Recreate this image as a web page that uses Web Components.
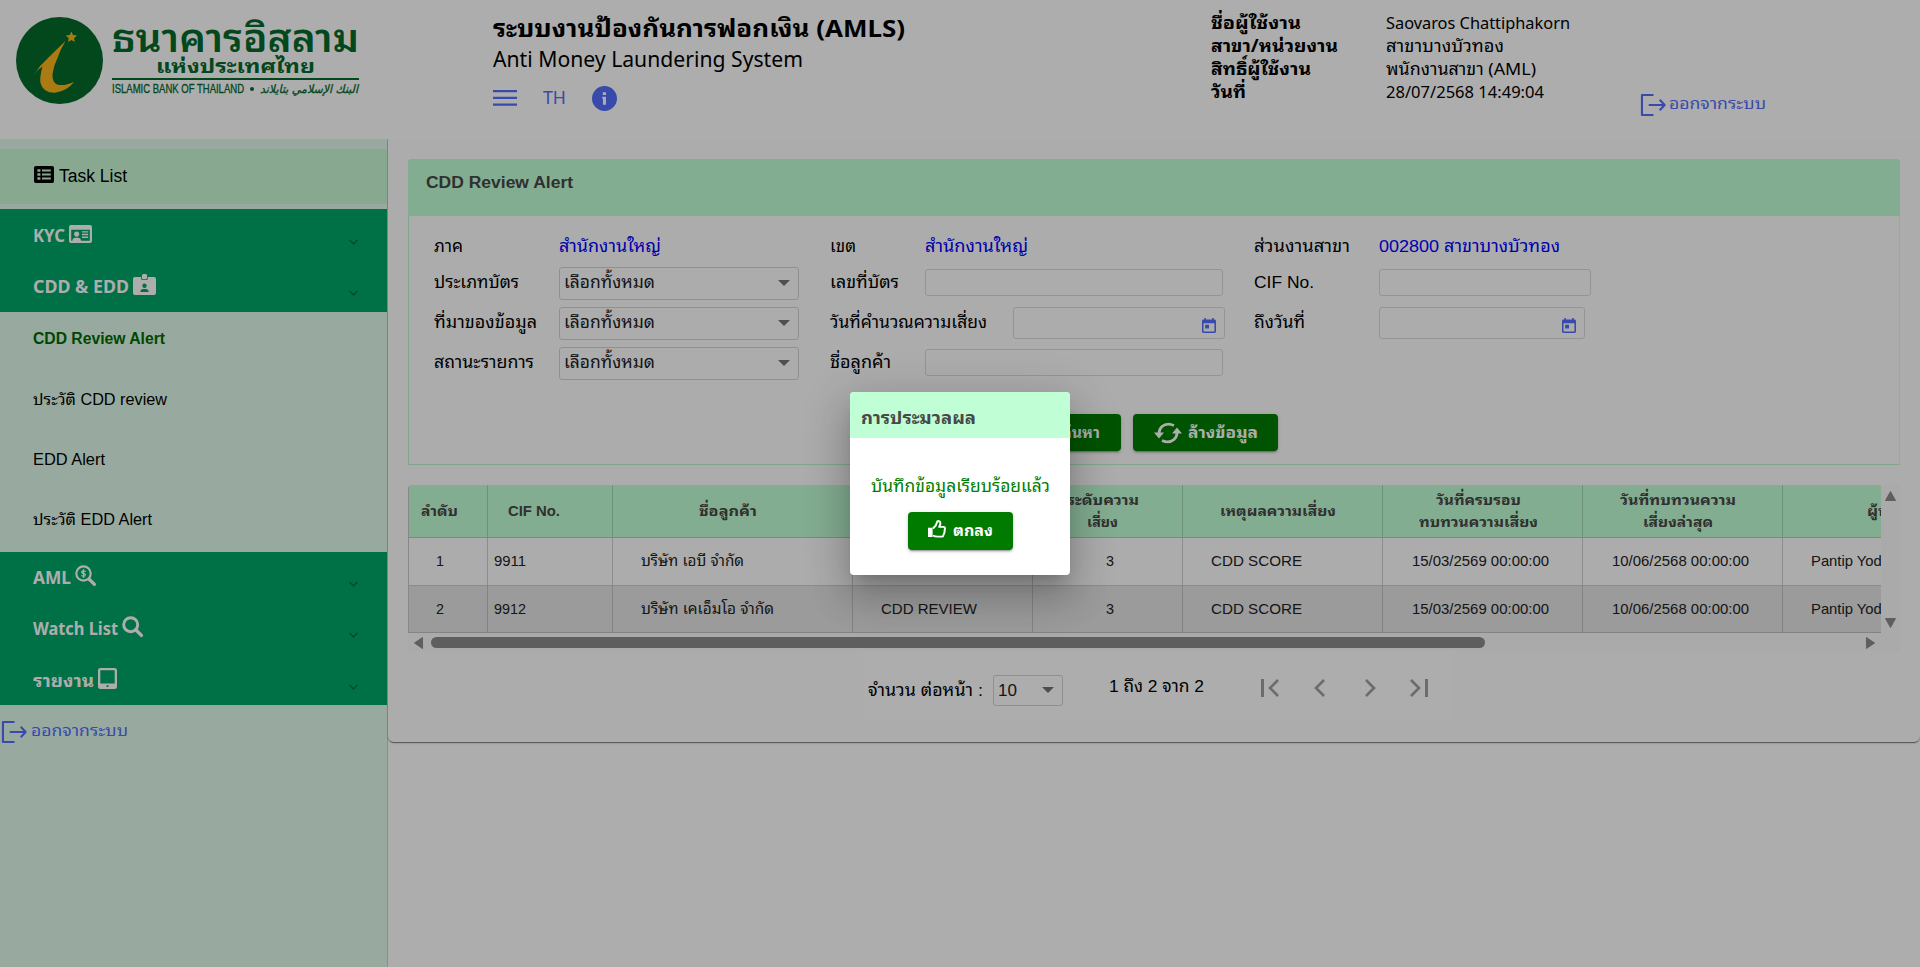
<!DOCTYPE html>
<html lang="th">
<head>
<meta charset="utf-8">
<title>AMLS</title>
<style>
html,body{margin:0;height:100%;overflow:hidden;background:#fff}
body{font-family:"Liberation Sans","Noto Sans Thai Looped","Loma","Waree","Garuda",sans-serif;font-size:16px;color:#000}
</style>
</head>
<body>
<amls-app></amls-app>
<script>
const make=(tag,html,after)=>customElements.define(tag,class extends HTMLElement{
  constructor(){super();this.attachShadow({mode:'open'});}
  connectedCallback(){if(this.done)return;this.done=true;
    this.shadowRoot.innerHTML=typeof html==='function'?html(this):html;if(after)after(this);}
});
const UI='"Noto Sans","Open Sans","Noto Sans Thai Looped","Loma","Waree",sans-serif';

/* icons */
const ICONS={
menu:['0 0 24 18','<path d="M0 1h24v2.2H0zM0 7.8h24V10H0zM0 14.6h24v2.2H0z"/>'],
info:['0 0 25 25','<path fill-rule="evenodd" d="M12.5 0a12.5 12.5 0 1 0 0 25a12.5 12.5 0 0 0 0-25zM10.8 6.3h3.2v2.8h-3.2zM10.2 10.8h3.8v7.9h-3.1v-6.2h-.7z"/>'],
exit:['0 0 26 22','<path fill="none" stroke="currentColor" stroke-width="2.2" stroke-linejoin="round" d="M13 1H1v20h12M8 11h16M19.5 5.8L24.6 11l-5.1 5.2"/>'],
list:['0 0 20 17','<path fill-rule="evenodd" d="M1.8 0h16.4Q20 0 20 1.8v13.4Q20 17 18.2 17H1.8Q0 17 0 15.200V1.800Q0 0 1.800 0zM3.400 3.200v2.600h3V3.200zM8 3.600v1.800h8.800V3.600zM3.400 7.200v2.600h3V7.200zM8 7.600v1.800h8.800V7.600zM3.400 11.200v2.600h3v-2.600zM8 11.600v1.800h8.800v-1.800z"/>'],
idcard:['0 0 24 19','<path fill-rule="evenodd" d="M2 0h20q2 0 2 2v15q0 2-2 2H2q-2 0-2-2V2Q0 0 2 0zM2.300 5v11.500h1.200q.5-3 3-3h3q2.500 0 3 3h9.200V5z"/><circle cx="8" cy="9.600" r="2.700"/><path d="M13.500 6.500h6.500v1.500h-6.500zM13.500 9.300h6.500v1.500h-6.500zM13.500 12.100h6.500v1.500h-6.500z"/>'],
badge:['0 0 24 21','<path fill-rule="evenodd" d="M2 3h6.500v1.500q0 1.500 1.500 1.500h4q1.500 0 1.500-1.500V3H22q2 0 2 2v14q0 2-2 2H2q-2 0-2-2V5q0-2 2-2zM12 9.400a2.300 2.300 0 1 0 0 4.600a2.300 2.300 0 0 0 0-4.600zM7.600 18h8.800q-.3-3-3-3h-2.800q-2.700 0-3 3z"/><rect x="9.300" y="0" width="5.400" height="5.200" rx="1.500"/>'],
search:['0 0 21 21','<circle cx="8.700" cy="8.700" r="7" fill="none" stroke="currentColor" stroke-width="3"/><path d="M14 14l5.400 5.400" stroke="currentColor" stroke-width="3.400" stroke-linecap="round"/>'],
dollar:['0 0 21 21','<circle cx="8.500" cy="8.500" r="7.200" fill="none" stroke="currentColor" stroke-width="2.200"/><path d="M14 14l5.400 5.400" stroke="currentColor" stroke-width="3.200" stroke-linecap="round"/><path fill="none" stroke="currentColor" stroke-width="1.300" d="M10.700 6.500Q8.700 5.400 7.100 6.200Q6 7.800 8.500 8.500Q11 9.200 10 10.700Q8.500 11.700 6.300 10.500M8.500 4.200v8.700"/>'],
tablet:['0 0 19 21','<path fill-rule="evenodd" d="M2.500 0h14Q19 0 19 2.500v16q0 2.500-2.500 2.500h-14Q0 21 0 18.500v-16Q0 0 2.500 0zM2.300 2.300v13.200h14.400V2.300zM8.500 17.200v1.800h2v-1.800z"/>'],
chev:['0 0 9 6','<path fill="none" stroke="currentColor" stroke-width="1.200" d="M.5 .8L4.500 4.800L8.500 .8"/>'],
cal:['3 1 18 20','<path d="M19 3h-1V1h-2v2H8V1H6v2H5c-1.110 0-1.990.9-1.990 2L3 19c0 1.100.890 2 2 2h14c1.100 0 2-.9 2-2V5c0-1.100-.9-2-2-2zm0 16H5V8h14v11zM7 10h5v5H7z"/>'],
caret:['0 0 12 6','<path d="M0 0h12L6 6z"/>'],
refresh:['0 0 28 20','<path fill="none" stroke="currentColor" stroke-width="2.700" d="M20 2.400Q13-.8 8 3.500Q4.900 6.500 5 10.500M8 17.600Q15 20.800 20 16.500Q23.100 13.500 23 9.500"/><path d="M0 9.500h10L5 15.500zM18 10.500h10L23 4.500z"/>'],
thumb:['0 0 18 19','<path d="M0 8.200h4.600V18H0z"/><path fill="none" stroke="currentColor" stroke-width="2" stroke-linejoin="round" d="M5 9Q8.500 5.800 9 2.200Q9.200 1 10.400 1Q12.600 1.200 12.300 4Q12 5.700 11.200 7.300H15.800Q17.300 7.600 16.900 9.300Q16.800 14 15 17Q14.600 17.600 13.600 17.600H9.500Q7 17.500 5 16.300"/>'],
first:['0 0 18 18','<path d="M0 0h3v18H0z"/><path fill="none" stroke="currentColor" stroke-width="2.600" d="M17 1L9 9l8 8"/>'],
prev:['0 0 11 18','<path fill="none" stroke="currentColor" stroke-width="2.600" d="M10 1L2 9l8 8"/>'],
next:['0 0 11 18','<path fill="none" stroke="currentColor" stroke-width="2.600" d="M1 1l8 8l-8 8"/>'],
last:['0 0 18 18','<path d="M15 0h3v18h-3z"/><path fill="none" stroke="currentColor" stroke-width="2.600" d="M1 1l8 8l-8 8"/>'],
up:['0 0 12 10','<path d="M6 .5L11.500 9.500H.5z" stroke="currentColor" stroke-linejoin="round"/>'],
down:['0 0 12 10','<path d="M6 9.500L11.500 .5H.5z" stroke="currentColor" stroke-linejoin="round"/>'],
left:['0 0 10 12','<path d="M.5 6L9.500 .5v11z" stroke="currentColor" stroke-linejoin="round"/>'],
right:['0 0 10 12','<path d="M9.500 6L.5 .5v11z" stroke="currentColor" stroke-linejoin="round"/>'],
logo:['0 0 87 87','<circle cx="43.500" cy="43.500" r="43.500" fill="#056a2c"/><path fill="#fcb61d" d="M49.500 24Q40 33 32 41Q24 48 18 57.500Q22 52 26.500 49.500Q23.500 60 24.500 66Q27 76 39 75.800Q51 74 58 65Q48 69.500 41 67.500Q36 65 36.500 57Q37.500 49 41.500 41Q44 33 49.500 24zM55.400 14.500l1.600 3.600 4 .4-3 2.700.9 3.900-3.500-2-3.500 2 .9-3.900-3-2.700 4-.4z"/>']
};
make('ui-icon',el=>{const [vb,body]=ICONS[el.getAttribute('name')];
 return `<style>:host{display:block;flex:none;width:${el.getAttribute('w')}px;height:${el.getAttribute('h')}px}svg{display:block;width:100%;height:100%;overflow:visible}</style><svg viewBox="${vb}" preserveAspectRatio="none" fill="currentColor">${body}</svg>`});

make('amls-logo',`<style>
:host{display:flex;gap:9px;padding:17px 0 0 16px;color:#056a2c}
.t{display:flex;flex-direction:column;width:247px}
.a{font-weight:600;font-size:38px;line-height:36px;height:38px;padding-top:4px}
.b{font-weight:700;font-size:19px;line-height:16px;height:16px;padding-left:44px}
.r{height:1.500px;background:#056a2c;margin-top:3px}
.c{display:flex;align-items:center;height:18px;font-size:12px;line-height:18px;-webkit-text-stroke:.3px}
i{width:4px;height:4px;border-radius:50%;background:#056a2c;margin:0 6px}
.ar{font:italic 400 11.500px/18px "DejaVu Sans"}
</style><ui-icon name="logo" w="87" h="87"></ui-icon><div class="t"><div class="a"><fit-text w="247">ธนาคารอิสลาม</fit-text></div><div class="b"><fit-text w="159">แห่งประเทศไทย</fit-text></div><div class="r"></div><div class="c"><fit-text w="132">ISLAMIC BANK OF THAILAND</fit-text><i></i><fit-text class="ar" w="98">البنك الإسلامي بتايلاند</fit-text></div></div>`);

make('log-out',el=>`<style>:host{display:flex;align-items:center;color:#536dfe;font:16px/24px ${UI};gap:${el.getAttribute('gap')}px}fit-text{position:relative;top:-2px}</style><ui-icon name="exit" w="25" h="22"></ui-icon><fit-text w="97">ออกจากระบบ</fit-text>`);

make('app-header',`<style>
:host{display:flex;height:139px;background:#fff;font-family:${UI};position:relative}
amls-logo{width:477px;font-family:"Liberation Sans","Noto Sans Thai Looped","Loma","Waree",sans-serif}
.m{width:719px;padding-top:12px}
.t{font-weight:700;font-size:24px;line-height:32px;height:30px}
.s{font-size:22px;line-height:32px;height:32px}
.k{display:flex;align-items:center;color:#536dfe;height:28px;padding-top:10px;font-size:18px;line-height:28px}
.u{display:grid;grid-template-columns:175px 253px;grid-auto-rows:23px;padding-top:11px;line-height:23px;font-size:17px;align-content:start;margin-left:-1px;margin-right:1px}
b{font-weight:700}
log-out{padding-top:94px;height:22px;margin-left:1px}
</style><amls-logo></amls-logo>
<div class="m"><div class="t"><fit-text w="412">ระบบงานป้องกันการฟอกเงิน (AMLS)</fit-text></div><div class="s"><fit-text w="310">Anti Money Laundering System</fit-text></div>
<div class="k"><ui-icon name="menu" w="24" h="18"></ui-icon><fit-text w="23" style="margin:-2px 26px 0 26px">TH</fit-text><ui-icon name="info" w="25" h="25"></ui-icon></div></div>
<div class="u"><b><fit-text w="90">ชื่อผู้ใช้งาน</fit-text></b><fit-text w="184">Saovaros Chattiphakorn</fit-text>
<b><fit-text w="127">สาขา/หน่วยงาน</fit-text></b><fit-text w="118">สาขาบางบัวทอง</fit-text>
<b><fit-text w="100">สิทธิ์ผู้ใช้งาน</fit-text></b><fit-text w="150">พนักงานสาขา (AML)</fit-text>
<b><fit-text w="35">วันที่</fit-text></b><fit-text w="158">28/07/2568 14:49:04</fit-text></div>
<log-out gap="3"></log-out>`);

make('nav-group',el=>`<style>:host{display:flex;align-items:center;height:51.300px;background:#00a567;color:#fff;font:700 18px/26px ${UI};padding:0 29px 0 33px;box-sizing:border-box}
.x{margin-left:auto;color:#063;padding-top:14px}.i{margin-left:4px;position:relative;top:-1px}</style>
<fit-text w="${el.getAttribute('tw')}">${el.getAttribute('label')}</fit-text><ui-icon class="i" name="${el.getAttribute('icon')}" w="${el.getAttribute('iw')}" h="${el.getAttribute('ih')}"></ui-icon><ui-icon class="x" name="chev" w="9" h="6"></ui-icon>`);
make('nav-item',`<style>:host{display:flex;align-items:center;height:60px;padding-left:33px;line-height:24px}</style><slot></slot>`);

make('app-sidebar',`<style>
:host{display:flex;flex-direction:column;width:387px;border-right:1px solid #c6d3cc;background:#e1fbeb;box-sizing:content-box}
.task{margin-top:10px;height:55px;background:#c9fad5;display:flex;align-items:center;gap:5px;padding-left:34px;font-size:18px;line-height:24px;margin-bottom:5px}
.task ui-icon{position:relative;top:-2px}.task fit-text{position:relative;top:-1px}
nav-item.on{font-weight:700;color:#006a00;position:relative;top:-1px}
.sub{height:240px;display:flex;flex-direction:column;position:relative;top:-2px}
.g{height:103px}
.g2{height:153px;background:#00a567}.g2 nav-group{height:51px;position:relative;top:-1px;background:none}.g2 nav-group:last-child{top:0}
log-out{padding:15px 0 0 2px}
</style>
<div class="task"><ui-icon name="list" w="20" h="17"></ui-icon><fit-text w="68">Task List</fit-text></div>
<div class="g"><nav-group label="KYC" tw="32" icon="idcard" iw="23" ih="18"></nav-group><nav-group label="CDD &amp;amp; EDD" tw="96" icon="badge" iw="23" ih="21"></nav-group></div>
<div class="sub"><nav-item class="on"><fit-text w="132">CDD Review Alert</fit-text></nav-item><nav-item><fit-text w="134">ประวัติ CDD review</fit-text></nav-item><nav-item><fit-text w="72">EDD Alert</fit-text></nav-item><nav-item><fit-text w="119">ประวัติ EDD Alert</fit-text></nav-item></div>
<div class="g2"><nav-group label="AML" tw="38" icon="dollar" iw="21" ih="21"></nav-group><nav-group label="Watch List" tw="85" icon="search" iw="21" ih="21"></nav-group><nav-group label="รายงาน" tw="61" icon="tablet" iw="19" ih="21"></nav-group></div>
<log-out gap="4"></log-out>`);

make('form-field',el=>`<style>:host{display:flex;align-items:center;height:40px}.l{width:${el.getAttribute('lw')}px;flex:none;line-height:24px;font-size:17px}</style><div class="l"><fit-text w="${el.getAttribute('tw')}">${el.getAttribute('label')}</fit-text></div><slot></slot>`);
make('drop-down',el=>`<style>:host{display:flex;align-items:center;justify-content:space-between;box-sizing:border-box;border:1px solid #d4d4d4;border-radius:3px;color:#222;font-size:17px;line-height:24px;padding:0 8px 0 4px}ui-icon{color:#757575}</style><slot></slot><ui-icon name="caret" w="12" h="6"></ui-icon>`);
make('text-box',el=>`<style>:host{display:flex;align-items:center;justify-content:flex-end;box-sizing:border-box;width:${el.getAttribute('w')}px;height:${el.getAttribute('h')||27}px;border:1px solid #dadada;border-radius:3px;color:#536dfe;padding:4px 8px 0;margin-bottom:${el.hasAttribute('date')?0:1}px}</style>${el.hasAttribute('date')?'<ui-icon name="cal" w="14" h="15"></ui-icon>':''}`);
make('action-button',`<style>:host{display:flex;align-items:center;justify-content:center;box-sizing:border-box;background:#007b00;color:#fff;border-radius:4px;font-weight:700;font-size:16px;line-height:24px;box-shadow:0 3px 1px -2px rgba(0,0,0,.2),0 2px 2px rgba(0,0,0,.14),0 1px 5px rgba(0,0,0,.12)}</style><slot></slot>`);

make('search-panel',`<style>
:host{display:block;height:306px;box-sizing:border-box;border:1px solid #bff5d0;border-right-color:#e6f5ea;border-top:0;border-radius:4px 4px 0 0}
.h{background:#c2ffd6;height:57px;margin:0 -1px;font-weight:700;font-size:17.400px;color:#484848;line-height:24px;box-sizing:border-box;padding:11px 0 0 18px;border-radius:4px 4px 0 0}
.f{display:grid;grid-template-columns:396px 424px 1fr;grid-template-rows:34px repeat(3,40px);padding:13px 0 0 25px}
.f .v{color:#00f;font-size:17px;line-height:24px}
.top{height:36px}
drop-down{width:240px;height:33px}
.b{display:flex;gap:12px;padding:31px 0 0 593px}
.b action-button{height:37px}
</style>
<div class="h"><fit-text w="147">CDD Review Alert</fit-text></div>
<div class="f">
<form-field class="top" label="ภาค" tw="29" lw="125"><fit-text class="v" w="102">สำนักงานใหญ่</fit-text></form-field>
<form-field class="top" label="เขต" tw="26" lw="95"><fit-text class="v" w="103">สำนักงานใหญ่</fit-text></form-field>
<form-field class="top" label="ส่วนงานสาขา" tw="96" lw="125"><fit-text class="v" w="181">002800 สาขาบางบัวทอง</fit-text></form-field>
<form-field label="ประเภทบัตร" tw="85" lw="125"><drop-down><fit-text w="91">เลือกทั้งหมด</fit-text></drop-down></form-field>
<form-field label="เลขที่บัตร" tw="69" lw="95"><text-box w="298"></text-box></form-field>
<form-field label="CIF No." tw="60" lw="125"><text-box w="212"></text-box></form-field>
<form-field label="ที่มาของข้อมูล" tw="103" lw="125"><drop-down><fit-text w="91">เลือกทั้งหมด</fit-text></drop-down></form-field>
<form-field label="วันที่คำนวณความเสี่ยง" tw="157" lw="183"><text-box date w="212" h="32"></text-box></form-field>
<form-field label="ถึงวันที่" tw="51" lw="125"><text-box date w="206" h="32"></text-box></form-field>
<form-field label="สถานะรายการ" tw="100" lw="125"><drop-down><fit-text w="91">เลือกทั้งหมด</fit-text></drop-down></form-field>
<form-field label="ชื่อลูกค้า" tw="61" lw="95"><text-box w="298"></text-box></form-field>
</div>
<div class="b"><action-button style="width:119px"><ui-icon name="search" w="19" h="19" style="margin:0 8px 0 11px"></ui-icon><fit-text w="39">ค้นหา</fit-text></action-button><action-button style="width:145px"><ui-icon name="refresh" w="28" h="20" style="margin-right:6px"></ui-icon><fit-text w="70">ล้างข้อมูล</fit-text></action-button></div>`);

const COLS='79px 125px 240px 180px 150px 200px 200px 200px 200px';
const row=(n,cif,name,nw)=>`<div class="r ${n%2?'':'alt'}"><div style="padding-left:27px"><fit-text w="8">${n}</fit-text></div><div style="padding-left:6px"><fit-text w="32">${cif}</fit-text></div><div style="padding-left:28px"><fit-text w="${nw}">${name}</fit-text></div><div style="padding-left:28px"><fit-text w="96">CDD REVIEW</fit-text></div><div style="padding-left:73px"><fit-text w="8">3</fit-text></div><div style="padding-left:28px"><fit-text w="91">CDD SCORE</fit-text></div><div style="padding-left:29px"><fit-text w="137">15/03/2569 00:00:00</fit-text></div><div style="padding-left:29px"><fit-text w="137">10/06/2568 00:00:00</fit-text></div><div style="padding-left:28px"><fit-text w="98">Pantip Yodchai</fit-text></div></div>`;
make('alert-grid',`<style>
:host{display:grid;grid-template-columns:1473px 19px;grid-template-rows:148px 18px}
.w{overflow:hidden;border-left:1px solid #c9c9c9;border-radius:4px 0 0 0}
.r{display:grid;grid-template-columns:${COLS};height:48px;font-size:15px;color:#222;line-height:20px;width:1574px}
.r>div{display:flex;align-items:center;border-right:1px solid #cfcfcf;border-bottom:1px solid #cfcfcf;padding-bottom:2px;box-sizing:border-box}
.alt{background:#e5e5e5;height:47px}.alt>div{border-color:#c2c2c2;padding-bottom:0}
.h{background:#c2ffd6;height:53px;font-size:14.500px;font-weight:700;color:#484848;line-height:22px}
.h>div{flex-direction:column;justify-content:center;border-color:#a4d6b5;padding:0 12px 1px 0}
.v{display:flex;flex-direction:column;justify-content:space-between;align-items:center;padding:6px 0 5px;box-sizing:border-box;color:#8b8b8b;background:#fbfbfb}
.s{display:flex;align-items:center;color:#8b8b8b;background:#fbfbfb;padding:1px 6px 0 6px}
.s i{width:1054px;height:11px;border-radius:6px;background:#8b8b8b;margin:0 auto 1px 8px}
.c{background:#fbfbfb}
</style>
<div class="w"><div class="r h"><div style="padding-right:17px"><fit-text w="37">ลำดับ</fit-text></div><div style="padding-right:32px"><fit-text w="52">CIF No.</fit-text></div><div style="padding-right:10px"><fit-text w="58">ชื่อลูกค้า</fit-text></div><div></div><div style="padding-right:10px"><fit-text w="72">ระดับความ</fit-text><fit-text w="31">เสี่ยง</fit-text></div><div style="padding-right:9px"><fit-text w="116">เหตุผลความเสี่ยง</fit-text></div><div style="padding-right:9px"><fit-text w="85">วันที่ครบรอบ</fit-text><fit-text w="119">ทบทวนความเสี่ยง</fit-text></div><div style="padding-right:9px"><fit-text w="116">วันที่ทบทวนความ</fit-text><fit-text w="70">เสี่ยงล่าสุด</fit-text></div><div style="padding-right:0;padding-left:84px;align-items:flex-start"><fit-text w="33">ผู้ทบ</fit-text></div></div>
${row(1,'9911','บริษัท เอบี จำกัด',103)}${row(2,'9912','บริษัท เคเอ็มโอ จำกัด',133)}</div>
<div class="v"><ui-icon name="up" w="11" h="10"></ui-icon><ui-icon name="down" w="11" h="10"></ui-icon></div>
<div class="s"><ui-icon name="left" w="9" h="12"></ui-icon><i></i><ui-icon name="right" w="9" h="12"></ui-icon></div><div class="c"></div>`);

make('grid-pager',`<style>
:host{display:flex;align-items:center;width:590px;height:70px;margin:0 0 0 455px;background:#fff;font-size:17px;line-height:24px;box-sizing:border-box;padding-left:5px}
drop-down{width:70px;height:31px;margin:8px 46px 0 10px}
.n{margin-top:10px}
.c{margin:2px 57px 0 0}
.i{display:flex;color:#8f8f8f;opacity:.85;margin-top:4px}
</style><fit-text class="n" w="115">จำนวน ต่อหน้า :</fit-text><drop-down><fit-text w="19" style="margin-top:1px">10</fit-text></drop-down><fit-text class="c" w="95">1 ถึง 2 จาก 2</fit-text>
<div class="i"><ui-icon name="first" w="18" h="18"></ui-icon><ui-icon name="prev" w="11" h="18" style="margin-left:35px"></ui-icon><ui-icon name="next" w="11" h="18" style="margin-left:40px"></ui-icon><ui-icon name="last" w="18" h="18" style="margin-left:34px"></ui-icon></div>`);

make('result-dialog',`<style>
:host{display:block;width:220px;height:183px;border-radius:4px;background:#fff;overflow:hidden;box-shadow:0 11px 15px -7px rgba(0,0,0,.2),0 24px 38px 3px rgba(0,0,0,.14),0 9px 46px 8px rgba(0,0,0,.12)}
.h{height:46px;background:#c0ffd6;padding:8px 0 0 11px;display:flex;align-items:center;font-weight:700;font-size:17px;line-height:24px;color:#484848;box-sizing:border-box}
.m{display:flex;justify-content:center;color:#008000;font-size:17px;line-height:24px;padding:37px 0 13px}
action-button{width:105px;height:38px;margin:0 auto;position:relative;left:.5px}
</style><div class="h"><fit-text w="115">การประมวลผล</fit-text></div><div class="m"><fit-text w="179">บันทึกข้อมูลเรียบร้อยแล้ว</fit-text></div><action-button><ui-icon name="thumb" w="18" h="18" style="margin:-4px 7px 0 0"></ui-icon><fit-text w="40">ตกลง</fit-text></action-button>`);

make('amls-app',`<style>
:host{display:block;height:967px;overflow:hidden;position:relative}
main{display:flex;height:828px}
.p{flex:1;height:603px;box-sizing:border-box;background:#fefefe;border-radius:0 0 6px 6px;padding:20px 20px 0;box-shadow:0 2px 1px -1px rgba(0,0,0,.3),0 1px 1px rgba(0,0,0,.24),0 1px 3px rgba(0,0,0,.12)}
alert-grid{margin-top:20px}
.o{position:absolute;inset:0;background:rgba(0,0,0,.32);display:flex;align-items:center;justify-content:center}
</style><app-header></app-header><main><app-sidebar></app-sidebar><div class="p"><search-panel></search-panel><alert-grid></alert-grid><grid-pager></grid-pager></div></main><div class="o"><result-dialog></result-dialog></div>`);

/* single line of text scaled horizontally to a given width */
make('fit-text',`<style>:host{display:block;flex:none;white-space:nowrap}span{display:inline-block;transform-origin:0 50%}</style><span><slot></slot></span>`,el=>{
 const w=+el.getAttribute('w'),s=el.shadowRoot.querySelector('span');
 const n=s.offsetWidth&&s.getBoundingClientRect().width;
 el.style.width=w+'px';if(n)s.style.transform='scaleX('+(w/n)+')';
});
</script>
</body>
</html>
